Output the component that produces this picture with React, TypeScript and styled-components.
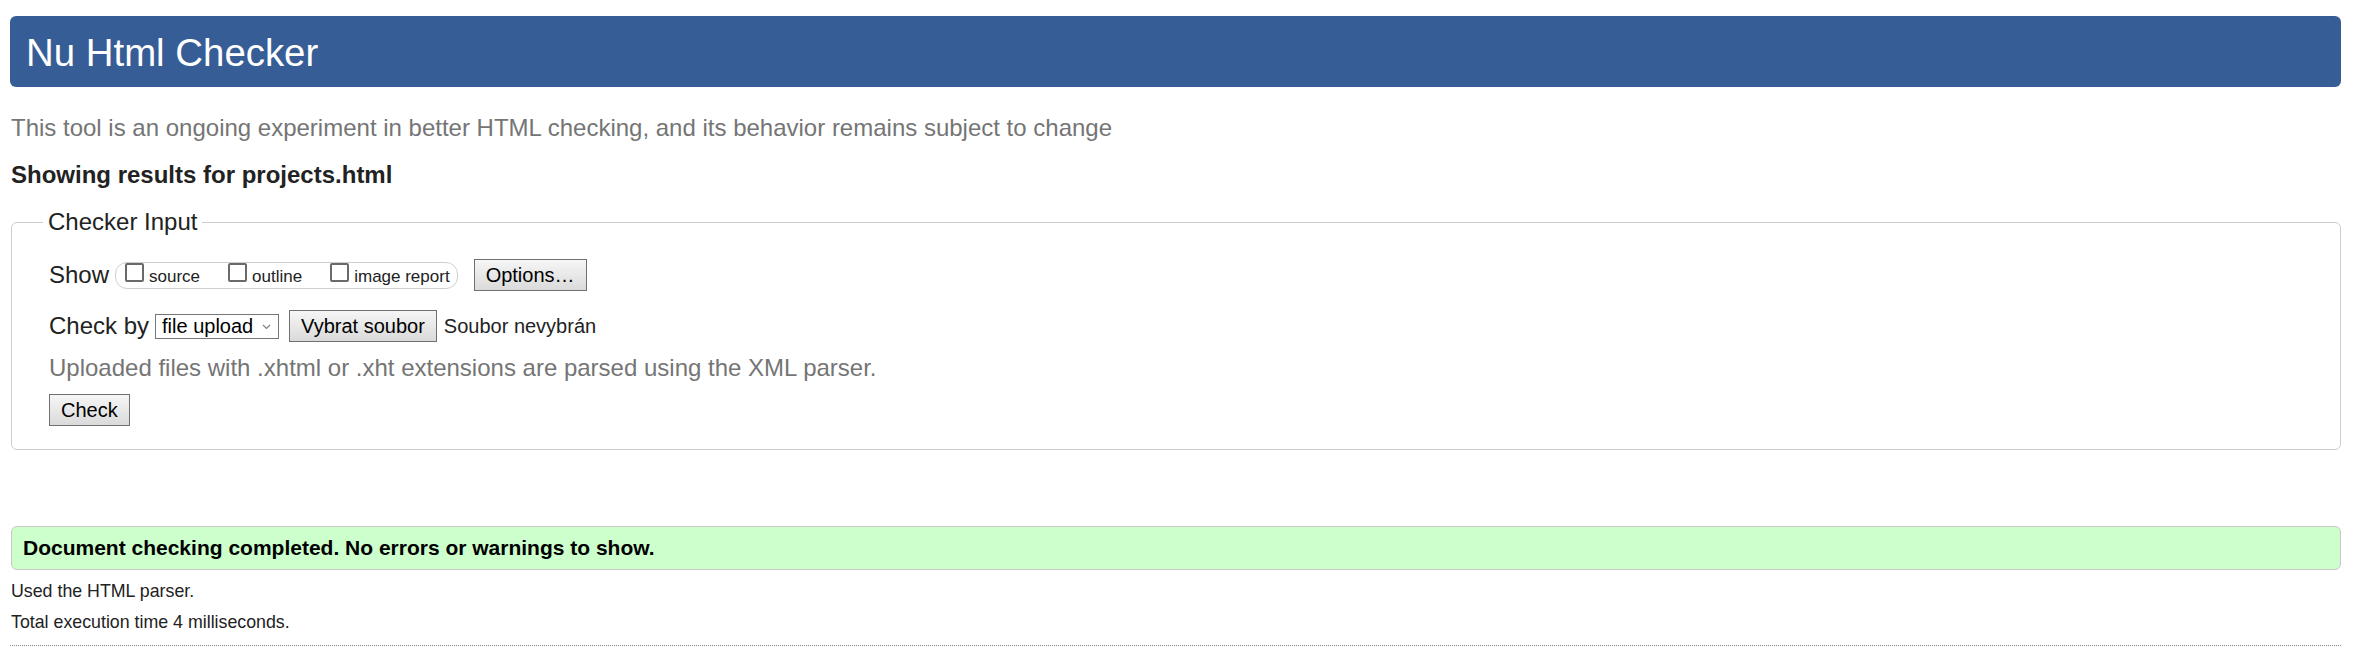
import React from "react";
import styled, { createGlobalStyle } from "styled-components";

const GlobalStyle = createGlobalStyle`
  html, body { margin: 0; padding: 0; background: #fff; }
  body {
    font-family: "Liberation Sans", Arial, Helvetica, sans-serif;
    color: #222;
    font-size: 24px;
  }
`;

const Page = styled.div`
  padding: 16px 18px 0 10px;
`;

const Header = styled.h1`
  margin: 0;
  height: 71px;
  padding-left: 16px;
  background: #365d96;
  border-radius: 6px;
  color: #fff;
  font-size: 38.4px;
  font-weight: normal;
  line-height: 73px;
  overflow: hidden;
  white-space: nowrap;
`;

const Intro = styled.p`
  margin: 27px 0 0 1px;
  font-size: 24px;
  line-height: 28px;
  color: #757575;
`;

const ResultsFor = styled.h2`
  margin: 19px 0 0 1px;
  font-size: 24px;
  line-height: 28px;
  font-weight: bold;
  color: #222;
`;

const Fieldset = styled.fieldset`
  margin: 19px 0 0 1px;
  padding: 23px 37px 23px 37px;
  border: 1px solid #cccccc;
  border-radius: 6px;
  min-width: 0;
`;

const Legend = styled.legend`
  margin-left: -6px;
  padding: 0 5px;
  font-size: 24px;
  line-height: 28px;
  color: #222;
`;

const Row = styled.div<{ $mt?: number }>`
  display: flex;
  align-items: center;
  height: 32px;
  margin-top: ${(p) => p.$mt ?? 0}px;
`;

const Label = styled.span`
  font-size: 24px;
  line-height: 28px;
  color: #222;
  margin-right: 6px;
  white-space: nowrap;
`;

const Pill = styled.span`
  display: inline-flex;
  align-items: flex-end;
  gap: 28px;
  box-sizing: border-box;
  height: 27px;
  padding: 0 7px 2px 9px;
  border: 1px solid #cfcfcf;
  border-radius: 12px;
`;

const Option = styled.label`
  display: inline-flex;
  align-items: baseline;
  gap: 5px;
  font-size: 17px;
  line-height: 19px;
  color: #222;
  white-space: nowrap;
`;

const Checkbox = styled.input`
  appearance: none;
  -webkit-appearance: none;
  box-sizing: border-box;
  width: 19px;
  height: 19px;
  margin: 0;
  border: 2px solid #6a6a6a;
  border-radius: 2px;
  background: #fff;
`;

const Button = styled.button<{ $ml?: number }>`
  box-sizing: border-box;
  height: 32px;
  margin: 0 0 0 ${(p) => p.$ml ?? 0}px;
  padding: 0 11px;
  font-family: inherit;
  font-size: 20px;
  line-height: 30px;
  color: #000;
  border: 1px solid #707070;
  border-radius: 0;
  background: linear-gradient(#f6f6f6, #dadada);
  white-space: nowrap;
`;

const SelectWrap = styled.span`
  position: relative;
  display: inline-flex;
  margin-right: 10px;
`;

const Select = styled.select`
  appearance: none;
  -webkit-appearance: none;
  box-sizing: border-box;
  width: 124px;
  height: 25px;
  margin: 0;
  padding: 0 0 0 6px;
  font-family: inherit;
  font-size: 20px;
  color: #000;
  background: #fff;
  border: 1px solid #767676;
  border-radius: 0;
`;

const Chevron = styled.svg`
  position: absolute;
  right: 8px;
  top: 10px;
  pointer-events: none;
`;

const FileName = styled.span`
  margin-left: 7px;
  font-size: 20px;
  color: #222;
  white-space: nowrap;
`;

const Hint = styled.p`
  margin: 12px 0 0;
  font-size: 24px;
  line-height: 28px;
  color: #757575;
`;

const Notice = styled.div`
  box-sizing: border-box;
  margin: 76px 0 0 1px;
  height: 44px;
  padding: 0 11px;
  border: 1px solid #c8c8c8;
  border-radius: 6px;
  background: #ccffcc;
  color: #000;
  font-size: 21px;
  font-weight: bold;
  line-height: 42px;
`;

const Meta = styled.p<{ $mt: number }>`
  margin: ${(p) => p.$mt}px 0 0 1px;
  font-size: 17.8px;
  line-height: 21px;
  color: #222;
`;

const Rule = styled.hr`
  margin: 11.5px 0 0;
  height: 0;
  border: 0;
  border-top: 1px dotted #888;
`;

export default function App() {
  return (
    <>
      <GlobalStyle />
      <Page>
        <Header>Nu Html Checker</Header>
        <Intro>
          This tool is an ongoing experiment in better HTML checking, and its
          behavior remains subject to change
        </Intro>
        <ResultsFor>Showing results for projects.html</ResultsFor>
        <Fieldset>
          <Legend>Checker Input</Legend>
          <Row>
            <Label>Show</Label>
            <Pill>
              <Option>
                <Checkbox type="checkbox" />
                source
              </Option>
              <Option>
                <Checkbox type="checkbox" />
                outline
              </Option>
              <Option>
                <Checkbox type="checkbox" />
                image report
              </Option>
            </Pill>
            <Button $ml={16}>Options…</Button>
          </Row>
          <Row $mt={19}>
            <Label>Check by</Label>
            <SelectWrap>
              <Select defaultValue="file">
                <option value="file">file upload</option>
              </Select>
              <Chevron width="9" height="6" viewBox="0 0 9 6">
                <path d="M1 1 L4.5 4.5 L8 1" fill="none" stroke="#808080" strokeWidth="1.2" />
              </Chevron>
            </SelectWrap>
            <Button>Vybrat soubor</Button>
            <FileName>Soubor nevybrán</FileName>
          </Row>
          <Hint>
            Uploaded files with .xhtml or .xht extensions are parsed using the
            XML parser.
          </Hint>
          <Row $mt={12}>
            <Button>Check</Button>
          </Row>
        </Fieldset>
        <Notice>Document checking completed. No errors or warnings to show.</Notice>
        <Meta $mt={11}>Used the HTML parser.</Meta>
        <Meta $mt={10}>Total execution time 4 milliseconds.</Meta>
        <Rule />
      </Page>
    </>
  );
}
